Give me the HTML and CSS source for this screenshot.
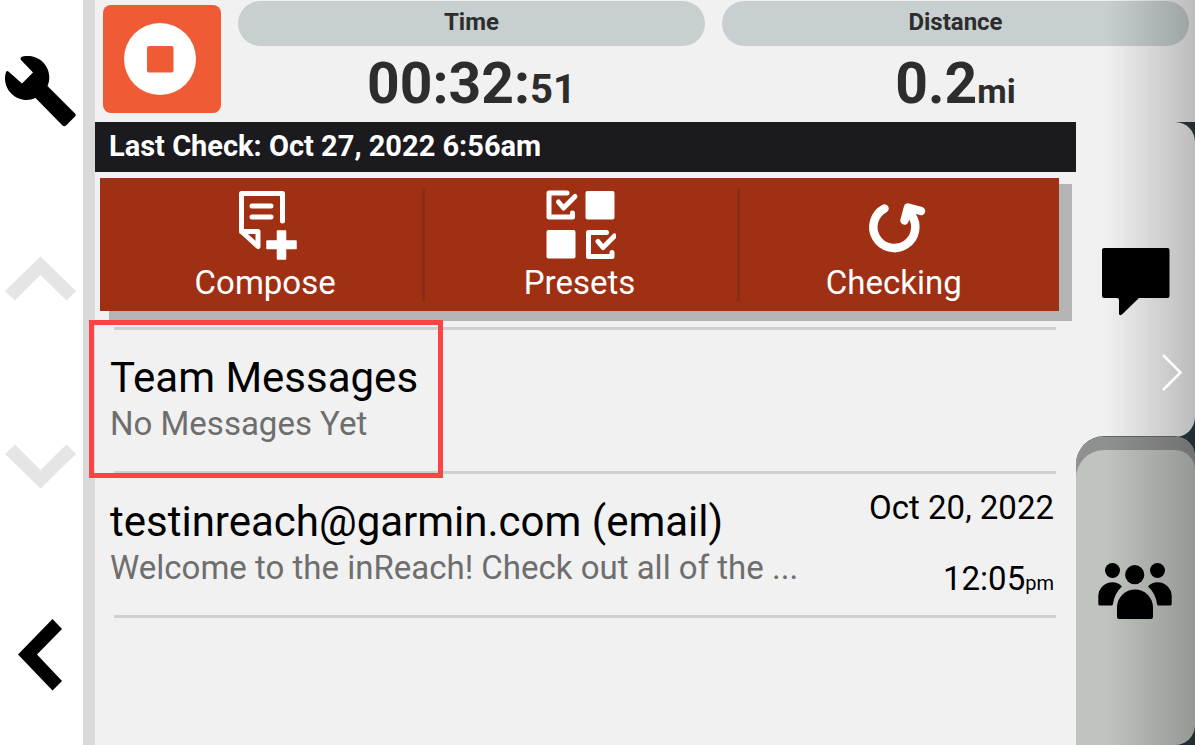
FILE: index.html
```html
<!DOCTYPE html>
<html lang="en">
<head>
<meta charset="utf-8">
<title>Messages</title>
<link rel="stylesheet" href="styles.css">
</head>
<body>
<nav class="sidebar" aria-label="Controls">
  <button class="nav-button" aria-label="Settings">
    <svg width="71" height="71" viewBox="5 56 71 71"><path d="M21 60Q19 56.500 26 56A21.500 21.500 0 0 1 47.500 86L75 113.500Q76.500 115 75 116.500L66 125.500Q64.300 127 62.500 125.500L35.500 98A21.500 21.500 0 0 1 6 72Q7 70 9 72L22 83.500L33 72.500Z"/></svg>
  </button>
  <button class="nav-button faded" aria-label="Up">
    <svg width="71" height="45" viewBox="4.500 256 71 45"><path d="M40 256.500L75.500 291L66 300.500L40 275L14.500 300.500L4.500 291Z"/></svg>
  </button>
  <button class="nav-button faded" aria-label="Down">
    <svg width="71" height="45" viewBox="4.500 444 71 45"><path d="M40 488.500L75.500 454L66 444.500L40 470L14.500 444.500L4.500 454Z"/></svg>
  </button>
  <button class="nav-button" aria-label="Back">
    <svg width="45" height="72" viewBox="18 618 45 72"><path d="M18 653.500L52.500 618L62 628L37 653.500L62 680L52.500 689.500Z"/></svg>
  </button>
</nav>

<div class="app">
  <header class="ride">
    <button class="stop" aria-label="Stop recording">
      <svg width="72" height="72" viewBox="0 0 72 72"><circle cx="36" cy="36" r="36" fill="#fff"/><rect x="23" y="23" width="26.500" height="26.500" rx="2" fill="#ee5b34"/></svg>
    </button>
    <section class="metric">
      <h2 class="metric-name">Time</h2>
      <p class="metric-value">00:32:<span class="metric-seconds">51</span></p>
    </section>
    <section class="metric">
      <h2 class="metric-name">Distance</h2>
      <p class="metric-value">0.2<span class="metric-unit">mi</span></p>
    </section>
  </header>

  <div class="body">
    <main class="content">
      <p class="status">Last Check: Oct 27, 2022 6:56am</p>

      <div class="actions">
        <button class="action">
          <svg width="66" height="72" viewBox="232 188 66 72" fill="none" stroke="#fff" stroke-width="5" stroke-linecap="round" stroke-linejoin="round"><path d="M282.500 221V193.500H241.500V231.500L258 246.500V231.500H241.500M252 206H271M252 217H271"/><path d="M277.500 231H285.500V241H296V248.500H285.500V259H277.500V248.500H267V241H277.500Z" fill="#fff" stroke-width="1.500"/></svg>
          Compose
        </button>
        <button class="action">
          <svg width="74" height="72" viewBox="542 188 74 72" fill="none" stroke="#fff" stroke-width="5" stroke-linecap="round" stroke-linejoin="round"><path d="M567 193H549V217H572.500V213M558.500 202L563.500 208L575 196.500"/><path d="M606.500 232.500H588.500V256.500H612V252.500M598 241.500L603 247.500L614.500 236"/><g fill="#fff" stroke="none"><rect x="585.500" y="191" width="29" height="28.500" rx="2"/><rect x="546.500" y="230" width="29" height="28.500" rx="2"/></g></svg>
          Presets
        </button>
        <button class="action">
          <svg width="66" height="72" viewBox="861 188 66 72" fill="none" stroke="#fff" stroke-width="8.500" stroke-linecap="round" stroke-linejoin="round"><path d="M884.500 208.500A21 21 0 1 0 911.500 215M904.500 220.500L908 207.500L921 211"/></svg>
          Checking
        </button>
      </div>

      <ul class="threads">
        <li class="thread">
          <div class="thread-text">
            <h3 class="thread-name">Team Messages</h3>
            <p class="thread-preview">No Messages Yet</p>
          </div>
          <span class="highlight"></span>
        </li>
        <li class="thread">
          <div class="thread-text">
            <h3 class="thread-name">testinreach@garmin.com (email)</h3>
            <p class="thread-preview">Welcome to the inReach! Check out all of the ...</p>
          </div>
          <div class="thread-when">
            <span>Oct 20, 2022</span>
            <span>12:05<small class="meridiem">pm</small></span>
          </div>
        </li>
      </ul>
    </main>

    <aside class="tabs">
      <button class="tab tab-messages" aria-label="Messages">
        <svg width="68" height="68" viewBox="1102 247 68 68"><path d="M1104 247H1167.500Q1169.500 247 1169.500 249V295Q1169.500 297 1167.500 297H1139L1122 313.500Q1119 315.500 1119 312.500V299Q1119 297 1117 297H1104Q1102 297 1102 295V249Q1102 247 1104 247Z"/></svg>
      </button>
      <button class="tab tab-team" aria-label="Team">
        <svg width="76" height="57" viewBox="1098 561 76 57"><circle cx="1112.500" cy="569.500" r="7.500"/><circle cx="1157.500" cy="569.500" r="7.500"/><circle cx="1134.700" cy="573.700" r="9.600"/><path d="M1117 616V606.500A18 18 0 0 1 1153 606.500V616Q1153 618 1151 618H1119Q1117 618 1117 616Z"/><path id="member" d="M1098.300 603V595A14 14 0 0 1 1112.500 581.300Q1118 581.300 1122 585.500Q1114.500 592 1113 603Q1112.800 604.500 1111.500 604.500H1100Q1098.300 604.500 1098.300 603Z"/><use href="#member" transform="translate(2270 0) scale(-1 1)"/></svg>
      </button>
    </aside>
  </div>

  <div class="edge">
    <svg width="20" height="38" viewBox="0 0 20 38" fill="none" stroke="#fff" stroke-width="2.500"><path d="M1 1L18.500 18.500L1 36"/></svg>
  </div>
</div>
</body>
</html>
```
FILE: styles.css
```css
* {
  box-sizing: border-box;
}

body {
  margin: 0;
  min-height: 100vh;
  display: flex;
  background: #f1f1f1;
  color: #000;
  font-family: Roboto, "Liberation Sans", sans-serif;
}

h2,
h3,
p,
ul {
  margin: 0;
  padding: 0;
  font-weight: 400;
}

button {
  margin: 0;
  padding: 0;
  border: 0;
  background: none;
  color: inherit;
  font: inherit;
}

svg {
  display: block;
}

.sidebar {
  flex: none;
  width: 95px;
  padding: 56px 3px 56px 0;
  display: flex;
  flex-direction: column;
  justify-content: space-between;
  background: #fff;
  border-right: 12px solid #d9d9d9;
}

.nav-button {
  height: 70px;
  display: grid;
  place-items: center;
}

.faded {
  fill: #e5e5e5;
}

.app {
  position: relative;
  flex: 1;
  min-width: 0;
  display: flex;
  flex-direction: column;
}

.ride {
  display: flex;
  gap: 17px;
  height: 122px;
  padding: 1px 6px 0 8px;
}

.stop {
  flex: none;
  width: 118px;
  height: 108px;
  margin-top: 4px;
  padding-right: 4px;
  display: grid;
  place-items: center;
  border-radius: 8px;
  background: #ee5b34;
}

.metric {
  flex: 1;
  text-align: center;
  color: #2d2d2d;
}

.metric-name {
  height: 45px;
  border-radius: 23px;
  background: #c7cfd0;
  font-size: 24px;
  line-height: 42px;
  font-weight: 700;
}

.metric-value {
  font-size: 57px;
  line-height: 76px;
  font-weight: 700;
}

.metric-seconds {
  font-size: 40px;
}

.metric-unit {
  font-size: 34px;
}

.body {
  flex: 1;
  display: flex;
}

.content {
  flex: 1;
  min-width: 0;
}

.status {
  padding: 0 14px 2px;
  background: #1b1a1f;
  color: #fff;
  font-size: 29px;
  line-height: 48px;
  font-weight: 700;
}

.actions {
  margin: 6px 17px 16px 5px;
  padding: 0 8px;
  display: grid;
  grid-template-columns: repeat(3, 1fr);
  background: #a03013;
  box-shadow: 11px 8px 0 2px #b4b4b4;
}

.action {
  padding: 10px 0 8px;
  display: flex;
  flex-direction: column;
  align-items: center;
  gap: 3px;
  color: #fff;
  font-size: 33px;
  line-height: 40px;
}

.action + .action {
  background: linear-gradient(#8a2d15, #8a2d15) left center / 3px 114px no-repeat;
}

.threads {
  margin: 0 20px 0 15px;
  list-style: none;
}

.threads::before,
.thread::after {
  content: "";
  display: block;
  height: 3px;
  margin-left: 4px;
  background: #cfcfcf;
}

.thread {
  position: relative;
  display: grid;
  grid-template-columns: 1fr auto;
}

.thread::after {
  grid-column: 1 / -1;
}

.thread-text {
  padding: 24px 0 25px;
}

.thread-name {
  font-size: 42px;
  line-height: 48px;
}

.thread-preview {
  color: #6e6e6e;
  font-size: 33px;
  line-height: 44px;
}

.thread-when {
  padding: 13px 2px 0 0;
  display: flex;
  flex-direction: column;
  gap: 29px;
  text-align: right;
  font-size: 33px;
  line-height: 42px;
}

.meridiem {
  font-size: 20px;
}

.highlight {
  position: absolute;
  top: -10px;
  bottom: -4px;
  left: -21px;
  width: 354px;
  border: 5px solid #fd4444;
}

.tabs {
  flex: none;
  width: 119px;
  display: flex;
  flex-direction: column;
  background: linear-gradient(to right, #f1f1f1 50%, #2b3a40 50%);
}

.tab {
  flex: 1;
  display: grid;
  place-items: center;
  border-radius: 0 20px 20px 0;
  background: #f1f1f1;
}

.tab-messages {
  padding-top: 6px;
}

.tab-team {
  border-top-left-radius: 28px;
  background: #bfc4be;
  box-shadow: inset 0 13px 0 #8f918f, 0 -1px 0 #5f6b68;
}

.edge {
  position: absolute;
  inset: 0 0 0 auto;
  width: 90px;
  padding-right: 13px;
  display: flex;
  justify-content: flex-end;
  align-items: center;
  background: linear-gradient(to right, rgba(0, 0, 0, 0), rgba(0, 0, 0, 0.22));
  pointer-events: none;
}
```
